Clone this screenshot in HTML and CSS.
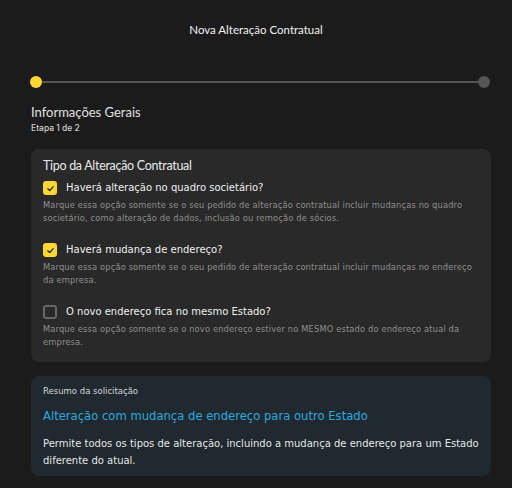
FILE: index.html
```html
<!DOCTYPE html>
<html>
    <head>
        <meta charset="utf-8">
        <meta name="viewport" content="width=device-width, initial-scale=1">
        <title>Nova Alteração Contratual</title>
        <link rel="stylesheet" href="styles.css">
    </head>
    <body>
        <header class="topbar">Nova Alteração Contratual</header>

        <main class="page">
            <!-- stepper, 2 etapas -->
            <div class="stepper">
                <span class="dot active"></span>
                <span class="track"></span>
                <span class="dot"></span>
            </div>

            <h1 class="step-title">Informações Gerais</h1>
            <p class="step-sub">Etapa 1 de 2</p>

            <section class="card">
                <h2 class="card-title">Tipo da Alteração Contratual</h2>

                <label class="option">
                    <span class="box checked">
                        <svg viewBox="0 0 10 10" width="9" height="9"><path d="M2 5.2 L4.2 7.2 L8 3" fill="none" stroke="#2a2a2a" stroke-width="1.4" stroke-linecap="round" stroke-linejoin="round"/></svg>
                    </span>
                    <span class="option-label">Haverá alteração no quadro societário?</span>
                </label>
                <p class="hint">Marque essa opção somente se o seu pedido de alteração contratual incluir mudanças no quadro societário, como alteração de dados, inclusão ou remoção de sócios.</p>

                <label class="option">
                    <span class="box checked">
                        <svg viewBox="0 0 10 10" width="9" height="9"><path d="M2 5.2 L4.2 7.2 L8 3" fill="none" stroke="#2a2a2a" stroke-width="1.4" stroke-linecap="round" stroke-linejoin="round"/></svg>
                    </span>
                    <span class="option-label">Haverá mudança de endereço?</span>
                </label>
                <p class="hint">Marque essa opção somente se o seu pedido de alteração contratual incluir mudanças no endereço da empresa.</p>

                <label class="option">
                    <span class="box"></span>
                    <span class="option-label">O novo endereço fica no mesmo Estado?</span>
                </label>
                <p class="hint">Marque essa opção somente se o novo endereço estiver no MESMO estado do endereço atual da empresa.</p>
            </section>

            <section class="summary">
                <p class="summary-label">Resumo da solicitação</p>
                <h3 class="summary-title">Alteração com mudança de endereço para outro Estado</h3>
                <p class="summary-text">Permite todos os tipos de alteração, incluindo a mudança de endereço para um Estado diferente do atual.</p>
            </section>
        </main>
    </body>
</html>
```

FILE: styles.css
```css
body {
    margin: 0;
    background-color: #1b1b1b;
    color: #e6e6e6;
    font-family: "DejaVu Sans", sans-serif;
}

.topbar {
    height: 60px;
    line-height: 60px;
    text-align: center;
    font-family: "Lato", sans-serif;
    font-size: 11.5px;
    color: #f0f0f0;
}

.page {
    padding: 0 21px 0 31px;
}

.stepper {
    display: flex;
    align-items: center;
    margin-top: 16px;
    margin-left: -1px;
    margin-right: 1px;
}

.stepper .dot {
    width: 12px;
    height: 12px;
    border-radius: 50%;
    background-color: #555;
    flex-shrink: 0;
}

.stepper .dot.active {
    background-color: #fdd835;
}

.stepper .track {
    flex: 1;
    height: 2px;
    background-color: #555;
}

.step-title {
    margin: 16px 0 0;
    font-family: "Lato", sans-serif;
    font-size: 13px;
    font-weight: 400;
    color: #e0e0e0;
}

.step-sub {
    margin: 3px 0 0;
    font-family: "Inter", sans-serif;
    font-size: 8.5px;
    font-weight: 500;
    color: #d0d0d0;
}

.card {
    margin-top: 16px;
    background-color: #292929;
    border-radius: 8px;
    padding: 9px 12px 13px;
}

.card-title {
    margin: 0;
    font-family: "Lato", sans-serif;
    font-size: 12.5px;
    line-height: 16px;
    letter-spacing: -0.3px;
    font-weight: 400;
    color: #e8e8e8;
}

.option {
    display: flex;
    align-items: center;
    gap: 9px;
    margin-top: 7px;
    line-height: 14px;
    cursor: pointer;
}

.hint + .option {
    margin-top: 18px;
}

.box {
    width: 14px;
    height: 14px;
    box-sizing: border-box;
    border: 2px solid #666;
    border-radius: 3px;
    display: flex;
    align-items: center;
    justify-content: center;
}

.box.checked {
    border: none;
    background-color: #fdd835;
}

.option-label {
    font-size: 10px;
    color: #eeeeee;
}

.hint {
    margin: 4px 0 0;
    font-size: 8.3px;
    line-height: 13px;
    letter-spacing: 0.15px;
    color: #8e8e8e;
}

.summary {
    margin-top: 14px;
    background-color: #1f292f;
    border-radius: 8px;
    padding: 9px 8px 7px 12px;
}

.summary-label {
    margin: 0;
    font-size: 8.5px;
    line-height: 12px;
    color: #d6d6d6;
}

.summary-title {
    margin: 11px 0 0;
    font-size: 11.6px;
    line-height: 16px;
    font-weight: 400;
    color: #2ea8df;
}

.summary-text {
    margin: 11px 0 0;
    font-size: 10px;
    line-height: 17px;
    color: #e6e6e6;
}
```
